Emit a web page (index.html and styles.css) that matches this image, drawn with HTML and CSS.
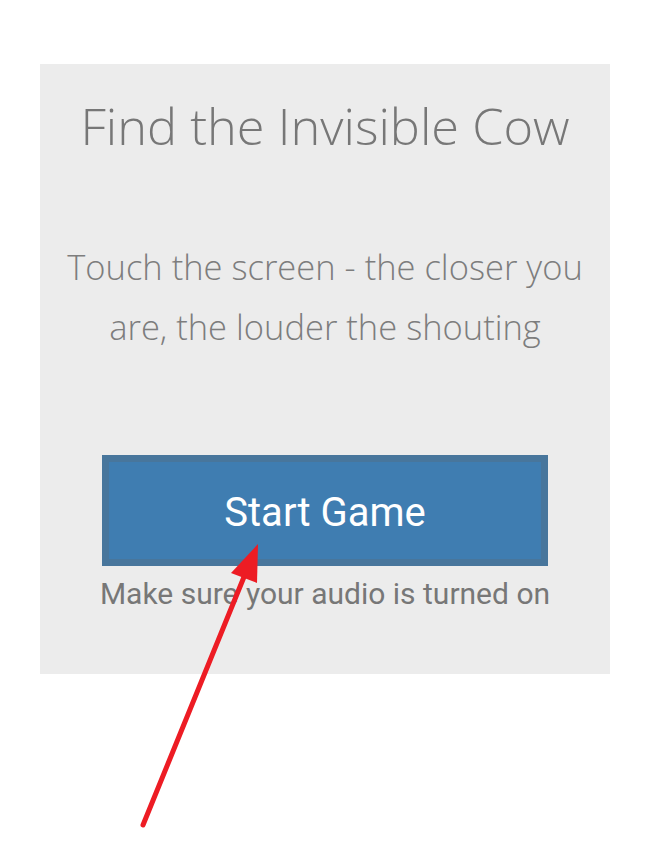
FILE: index.html
```html
<!DOCTYPE html>
<html lang="en">
<head>
  <meta charset="UTF-8" />
  <meta name="viewport" content="width=device-width, initial-scale=1.0"/>
  <title>Find the Invisible Cow</title>
  <link rel="stylesheet" href="styles.css">
</head>

<body>

  <div class="game-panel">
    <h1>Find the Invisible Cow</h1>
    <p class="intro">Touch the screen - the closer you are, the louder the shouting</p>

    <button type="button" class="start-btn">Start Game</button>
    <p class="note">Make sure your audio is turned on</p>
  </div>

  <!-- annotation arrow pointing at the button -->
  <svg class="arrow" width="650" height="867" viewBox="0 0 650 867">
    <line x1="143" y1="825" x2="246" y2="572" stroke="#ed1c24" stroke-width="5" stroke-linecap="round"/>
    <polygon points="258,544 231,573 257,583" fill="#ed1c24"/>
  </svg>

</body>
</html>
```

FILE: styles.css
```css
body {
  margin: 0;
  padding: 0;
  background-color: #fff;
  font-family: 'Open Sans', sans-serif;
}

.game-panel {
  margin: 64px 40px 0;
  height: 610px;
  box-sizing: border-box;
  padding-top: 32px;
  background-color: #ececec;
  text-align: center;
}

h1 {
  margin: 0;
  font-size: 50.5px;
  font-weight: 300;
  line-height: 1.2;
  color: #777;
}

.intro {
  margin: 80px 8px 0;
  font-size: 34.5px;
  font-weight: 300;
  line-height: 60px;
  color: #7d7d7d;
}

.start-btn {
  display: block;
  margin: 98px auto 0;
  width: 446px;
  height: 111px;
  padding: 4px 0 0;
  background-color: #3f7db1;
  border: 7px solid #48769c;
  font-family: 'Roboto', sans-serif;
  font-size: 40px;
  color: #fff;
  cursor: pointer;
}

.note {
  margin: 10px 0 0;
  font-family: 'Roboto', sans-serif;
  font-size: 30px;
  color: #777;
}

.arrow {
  position: absolute;
  top: 0;
  left: 0;
  pointer-events: none;
}
```
